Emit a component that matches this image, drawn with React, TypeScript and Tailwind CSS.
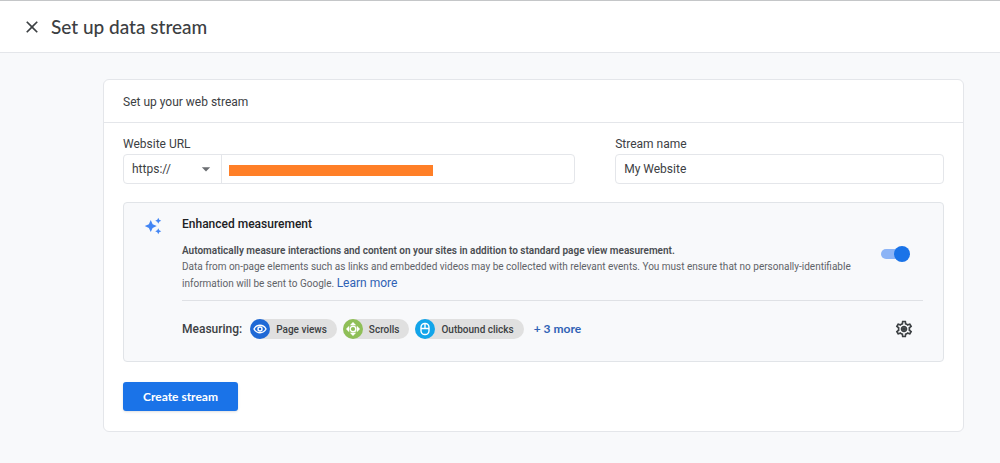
import { useState } from "react";
import type { ReactNode } from "react";
import { MdArrowDropDown, MdAutoAwesome, MdClose, MdOutlineSettings } from "react-icons/md";

interface ChipProps {
  label: string;
  color: string;
  children: ReactNode;
}

function Chip({ label, color, children }: ChipProps) {
  return (
    <li className="flex h-5 items-center gap-1.5 rounded-full bg-[#e0e0e0] pr-2.5 text-[10px] font-medium text-[#3c4043]">
      <span className={`flex size-5 items-center justify-center rounded-full ${color}`}>
        <svg className="size-4" viewBox="0 0 16 16" fill="none" stroke="white" strokeWidth={1.4}>
          {children}
        </svg>
      </span>
      {label}
    </li>
  );
}

export default function App() {
  const [protocol, setProtocol] = useState("https://");
  const [streamName, setStreamName] = useState("My Website");
  const [enhanced, setEnhanced] = useState(true);

  return (
    <div className="min-h-screen bg-[#f8f9fb] font-['Roboto',sans-serif] text-[#3c4043]">
      <header className="flex h-[53px] items-center gap-[9px] border-t border-b border-t-[#c4c6c8] border-b-[#e4e6ea] bg-white pl-[22px]">
        <button type="button" aria-label="Close">
          <MdClose className="size-5" />
        </button>
        <h1 className="font-['Lato','Roboto',sans-serif] text-[19px] leading-6 font-medium">Set up data stream</h1>
      </header>

      <main className="pt-[26px] pr-9 pb-8 pl-[103px]">
        <section className="rounded-md border border-[#e4e6ea] bg-white">
          <h2 className="border-b border-[#e4e6ea] px-[19px] pt-[13px] pb-[11px] text-xs leading-[18px]">
            Set up your web stream
          </h2>

          <form className="px-[19px] pt-3 pb-5" onSubmit={(e) => e.preventDefault()}>
            <div className="grid grid-cols-[11fr_8fr] gap-10">
              <div>
                <label htmlFor="url" className="block text-xs leading-[18px]">
                  Website URL
                </label>
                <div className="mt-px flex h-[30px] rounded border border-[#e4e6ea]">
                  <div className="relative w-[98px] border-r border-[#e4e6ea]">
                    <select
                      aria-label="Protocol"
                      value={protocol}
                      onChange={(e) => setProtocol(e.target.value)}
                      className="size-full appearance-none pl-2 text-xs outline-none"
                    >
                      <option>https://</option>
                      <option>http://</option>
                    </select>
                    <MdArrowDropDown className="pointer-events-none absolute top-1 right-[5px] size-5 text-[#6b6e72]" />
                  </div>
                  <div className="relative flex-1">
                    <input id="url" type="text" className="size-full px-2 text-xs outline-none" />
                    <span className="pointer-events-none absolute top-2.5 left-[7px] h-[11px] w-[204px] bg-[#ff7f27]" />
                  </div>
                </div>
              </div>
              <div>
                <label htmlFor="name" className="block text-xs leading-[18px]">
                  Stream name
                </label>
                <input
                  id="name"
                  type="text"
                  value={streamName}
                  onChange={(e) => setStreamName(e.target.value)}
                  className="mt-px block h-[30px] w-full rounded border border-[#e4e6ea] px-2 text-xs outline-none"
                />
              </div>
            </div>

            <div className="mt-[18px] flex rounded border border-[#e1e4e8] bg-[#f8f9fb] pt-3 pr-5 pl-5">
              <MdAutoAwesome className="mt-0.5 mr-5 size-[18px] shrink-0 text-[#4285f4]" />
              <div className="flex-1">
                <div className="flex items-center justify-between border-b border-[#dfe1e5] pr-[13px] pb-2">
                  <div className="w-[680px]">
                    <h3 className="text-xs leading-[18px] font-medium text-[#202124]">Enhanced measurement</h3>
                    <p className="mt-2.5 text-[10px] leading-4 text-[#5f6368]">
                      <strong className="block font-semibold text-[#4a4d51]">
                        Automatically measure interactions and content on your sites in addition to standard page view
                        measurement.
                      </strong>
                      Data from on-page elements such as links and embedded videos may be collected with relevant
                      events. You must ensure that no personally-identifiable information will be sent to Google.{" "}
                      <a href="#" className="text-xs leading-4 text-[#2f62b5]">
                        Learn more
                      </a>
                    </p>
                  </div>
                  <input
                    type="checkbox"
                    role="switch"
                    aria-label="Enhanced measurement"
                    checked={enhanced}
                    onChange={(e) => setEnhanced(e.target.checked)}
                    className="relative h-4 w-[29px] shrink-0 appearance-none before:absolute before:top-[3px] before:left-0 before:h-2.5 before:w-[26px] before:rounded-full before:bg-[#bdc1c6] after:absolute after:top-0 after:left-0 after:size-4 after:rounded-full after:bg-white checked:before:bg-[#8cb4f6] checked:after:left-[13px] checked:after:bg-[#1a73e8]"
                  />
                </div>

                <div className="flex items-center pt-[18px] pr-[9px] pb-[22px]">
                  <span className="mr-2 text-xs leading-[18px] font-medium">Measuring:</span>
                  <ul className="flex gap-1.5">
                    <Chip label="Page views" color="bg-[#1f69d6]">
                      <path d="M2 8c1.3-2.4 3.4-3.7 6-3.7s4.7 1.3 6 3.7c-1.3 2.4-3.4 3.7-6 3.7S3.3 10.4 2 8z" />
                      <circle cx="8" cy="8" r="2" />
                    </Chip>
                    <Chip label="Scrolls" color="bg-[#8fbf58]">
                      <circle cx="8" cy="8" r="2.8" />
                      <path
                        d="M8 1l3.2 3.2h-6.4zM8 15l3.2-3.2h-6.4zM1 8l3.2-3.2v6.4zM15 8l-3.2-3.2v6.4z"
                        fill="white"
                        stroke="none"
                      />
                    </Chip>
                    <Chip label="Outbound clicks" color="bg-[#12a5ea]">
                      <rect x="4" y="2.5" width="8" height="11" rx="3.8" />
                      <path d="M4 7.5h8M8 2.5v5" />
                    </Chip>
                  </ul>
                  <button type="button" className="ml-2.5 font-['Lato','Roboto',sans-serif] text-xs font-bold text-[#2f62b5]">
                    + 3 more
                  </button>
                  <button type="button" aria-label="Measurement settings" className="ml-auto text-[#3c4043]">
                    <svg className="size-5" viewBox="0 0 24 24" fill="currentColor">
                      <MdOutlineSettings size={24} />
                      <circle cx="12" cy="12" r="2.5" />
                    </svg>
                  </button>
                </div>
              </div>
            </div>

            <button
              type="submit"
              className="mt-5 block h-[29px] rounded-[3px] bg-[#1a73e8] px-5 font-['Lato','Roboto',sans-serif] text-xs font-bold text-white shadow-sm"
            >
              Create stream
            </button>
          </form>
        </section>
      </main>
    </div>
  );
}
